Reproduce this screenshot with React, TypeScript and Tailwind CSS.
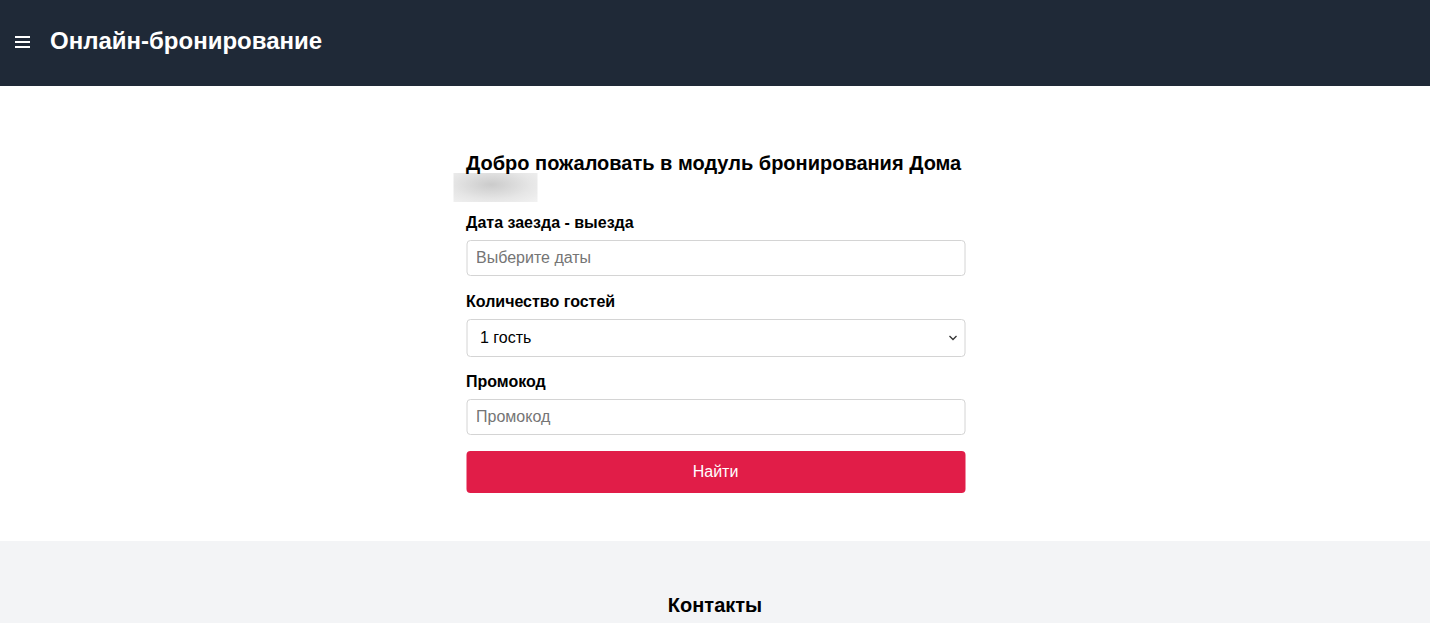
import React from "react";

export default function App() {
  return (
    <div className="min-h-screen bg-white text-black font-['Liberation_Sans',Arial,sans-serif]">
      <header className="h-[86px] bg-[#1f2937] flex items-center px-[15px] pb-[4px]">
        <svg width="16" height="14" viewBox="0 0 16 14" className="mr-[19px] mt-[2px]" aria-hidden="true">
          <rect x="0" y="1" width="15" height="2" fill="#ffffff" />
          <rect x="0" y="6" width="15" height="2" fill="#ffffff" />
          <rect x="0" y="11" width="15" height="2" fill="#ffffff" />
        </svg>
        <h1 className="text-white text-[24px] font-bold leading-8">Онлайн-бронирование</h1>
      </header>

      <main className="pt-[65px] pb-[48px]">
        <div className="w-[499px] mx-auto translate-x-[0.5px]">
          <h2 className="text-[20px] font-bold leading-6 whitespace-nowrap">
            Добро пожаловать в модуль бронирования Дома
            <span className="block -ml-[13px] mt-[-2px] w-[84px] h-[29px] bg-[radial-gradient(ellipse_at_45%_40%,#cbcbcb,#e6e6e6_60%,#f2f2f2)]" />
          </h2>

          <div className="mt-[9px]">
            <label className="block text-[16px] font-bold leading-6 mb-[5px]">Дата заезда - выезда</label>
            <input
              type="text"
              placeholder="Выберите даты"
              className="w-full h-[36px] border border-[#d4d4d4] rounded-[4px] px-[9px] text-[16px] placeholder:text-[#757575] outline-none"
            />
          </div>

          <div className="mt-[14px]">
            <label className="block text-[16px] font-bold leading-6 mb-[5px]">Количество гостей</label>
            <div className="relative">
              <select className="w-full h-[38px] appearance-none border border-[#d4d4d4] rounded-[4px] pl-[13px] pr-8 text-[16px] bg-white outline-none">
                <option>1 гость</option>
                <option>2 гостя</option>
                <option>3 гостя</option>
              </select>
              <svg width="9" height="6" viewBox="0 0 9 6" className="absolute right-[8px] top-[16px] pointer-events-none" aria-hidden="true">
                <path d="M1 1 L4.5 4.5 L8 1" stroke="#333" strokeWidth="1.3" fill="none" />
              </svg>
            </div>
          </div>

          <div className="mt-[13px]">
            <label className="block text-[16px] font-bold leading-6 mb-[5px]">Промокод</label>
            <input
              type="text"
              placeholder="Промокод"
              className="w-full h-[36px] border border-[#d4d4d4] rounded-[4px] px-[9px] text-[16px] placeholder:text-[#757575] outline-none"
            />
          </div>

          <button className="mt-[16px] w-full h-[42px] rounded-[4px] bg-[#e11d48] text-white text-[16px]">
            Найти
          </button>
        </div>
      </main>

      <section className="bg-[#f3f4f6] pt-[48px] pb-[48px]">
        <h2 className="text-center text-[20px] font-bold leading-8">Контакты</h2>
      </section>
    </div>
  );
}
